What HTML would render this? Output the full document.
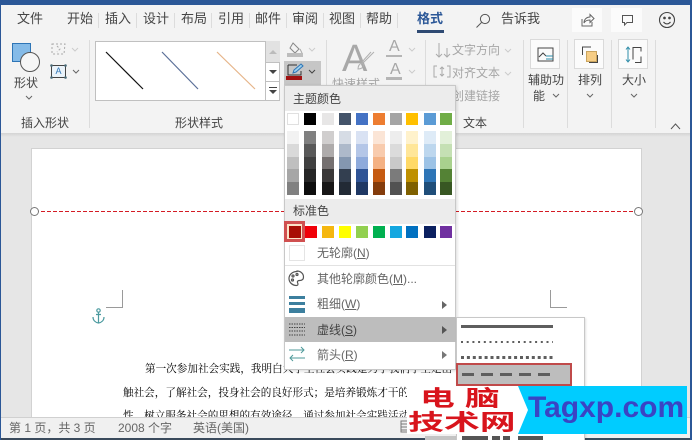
<!DOCTYPE html>
<html lang="zh"><head><meta charset="utf-8">
<style>
*{box-sizing:border-box}
html,body{margin:0;padding:0}
html{background:#e6e6e6}
body{width:692px;height:440px;position:relative;overflow:hidden;background:#e6e6e6;font-family:"Liberation Sans","Noto Sans CJK SC",sans-serif;color:#444;font-size:12px;filter:blur(.3px)}
.a{position:absolute}
.t{position:absolute;white-space:nowrap;line-height:16px}
.tb{font-size:13px}
.g{color:#a6a6a6}
.sep{position:absolute;width:1px;background:#dcdcdc}
.sw{position:absolute;width:12px;height:12px}
.col{position:absolute;width:12px;top:131px;height:64px}
.col i{display:block;height:12.8px}
.ul{text-decoration:underline}
.dt{position:absolute;left:31px;font-family:'Liberation Serif','Noto Serif CJK SC',serif;font-size:10.6px;color:#000;white-space:nowrap;line-height:16px}
svg{position:absolute;overflow:visible}
</style></head><body>

<!-- top bar + ribbon -->
<div class="a" style="left:0;top:0;width:692px;height:5px;background:#2b5797"></div>
<div class="a" style="left:0;top:5px;width:692px;height:128px;background:#f3f3f3"></div>
<div class="a" style="left:0;top:133px;width:692px;height:4px;background:linear-gradient(#d4d4d4,#e6e6e6)"></div>

<!-- tabs -->
<div class="t tb" style="left:17px;top:11px">文件</div>
<div class="t tb" style="left:67px;top:11px">开始</div>
<div class="t tb" style="left:105px;top:11px">插入</div>
<div class="t tb" style="left:143px;top:11px">设计</div>
<div class="t tb" style="left:181px;top:11px">布局</div>
<div class="t tb" style="left:218px;top:11px">引用</div>
<div class="t tb" style="left:255px;top:11px">邮件</div>
<div class="t tb" style="left:292px;top:11px">审阅</div>
<div class="t tb" style="left:329px;top:11px">视图</div>
<div class="t tb" style="left:366px;top:11px">帮助</div>
<div class="sep" style="left:98px;top:13px;height:15px"></div>
<div class="sep" style="left:136px;top:13px;height:15px"></div>
<div class="sep" style="left:174px;top:13px;height:15px"></div>
<div class="sep" style="left:211px;top:13px;height:15px"></div>
<div class="sep" style="left:249px;top:13px;height:15px"></div>
<div class="sep" style="left:286px;top:13px;height:15px"></div>
<div class="sep" style="left:323px;top:13px;height:15px"></div>
<div class="sep" style="left:360px;top:13px;height:15px"></div>
<div class="sep" style="left:397px;top:13px;height:15px"></div>
<div class="t tb" style="left:417px;top:11px;color:#2b5797;font-weight:bold">格式</div>
<div class="a" style="left:417px;top:30px;width:27px;height:3px;background:#2f4a73"></div>
<svg style="left:475px;top:13px" width="18" height="16" fill="none" stroke="#555"><circle cx="10" cy="6" r="4.6"/><path d="M6.5 9.500L1.500 14.500"/></svg>
<div class="t tb" style="left:501px;top:11px">告诉我</div>
<div class="a" style="left:572px;top:8px;width:30px;height:24px;background:#fbfbfb"></div>
<div class="a" style="left:611px;top:8px;width:31px;height:24px;background:#fbfbfb"></div>
<svg style="left:580px;top:13px" width="16" height="14" fill="none" stroke="#666"><path d="M2 6v7h10V9M4 10c0-4 3-6 6-6V1.500l4 4-4 4V7c-3 0-5 1-6 3z"/></svg>
<svg style="left:621px;top:14px" width="14" height="13" fill="none" stroke="#555"><path d="M1.500 1.500h10v7H6L3.500 11V8.500h-2z"/></svg>
<svg style="left:658px;top:11px" width="18" height="18" fill="none" stroke="#444" stroke-width="1.100"><circle cx="9" cy="9" r="7.500"/><circle cx="6.500" cy="7" r=".8" fill="#444"/><circle cx="11.500" cy="7" r=".8" fill="#444"/><path d="M5.500 11c2 2.500 5 2.500 7 0"/></svg>

<!-- insert shape group -->
<div class="a" style="left:12px;top:43px;width:19px;height:19px;background:#85bbe8;border:1px solid #2e75b6"></div>
<div class="a" style="left:20px;top:52px;width:20px;height:20px;border-radius:50%;background:#f6f6f6;border:1px solid #555"></div>
<div class="t" style="left:14px;top:75px">形状</div>
<svg style="left:25px;top:95px" width="8" height="5" fill="none" stroke="#666"><path d="M1 1l3 3 3-3"/></svg>
<svg style="left:50px;top:42px" width="17" height="14" fill="none" stroke="#aaa" stroke-dasharray="2 2"><path d="M2 2h13l-1 10H2zM7 4l3 3-3 3"/></svg>
<svg style="left:71px;top:47px" width="8" height="5" fill="none" stroke="#ccc"><path d="M1 1l3 3 3-3"/></svg>
<div class="a" style="left:51px;top:65px;width:15px;height:13px;border:1px solid #444;background:#eaf3fa;text-align:center;font-size:9px;line-height:11px;color:#2e75b6">A</div>
<svg style="left:50px;top:64px" width="17" height="15" fill="#4a6b78"><circle cx="1.500" cy="1.500" r="1.300"/><circle cx="15.500" cy="1.500" r="1.300"/><circle cx="1.500" cy="13.500" r="1.300"/><circle cx="15.500" cy="13.500" r="1.300"/></svg>
<svg style="left:72px;top:69px" width="8" height="5" fill="none" stroke="#666"><path d="M1 1l3 3 3-3"/></svg>
<div class="t" style="left:21px;top:115px">插入形状</div>
<div class="sep" style="left:89px;top:40px;height:88px"></div>

<!-- shape styles -->
<div class="a" style="left:95px;top:41px;width:171px;height:60px;background:#fff;border:1px solid #c0c0c0"></div>
<svg style="left:95px;top:41px" width="171" height="60"><path d="M11 11L48 48" stroke="#111" stroke-width="1.200"/><path d="M67 11L103 48" stroke="#5a6f98" stroke-width="1.200"/><path d="M122 11L160 48" stroke="#e6b488" stroke-width="1.200"/></svg>
<div class="a" style="left:266px;top:41px;width:14px;height:60px;background:#fff;border:1px solid #c0c0c0;border-left:0"></div>
<div class="a" style="left:266px;top:41px;width:14px;height:21px;background:#e2e2e2"></div>
<div class="a" style="left:266px;top:62px;width:14px;height:1px;background:#c0c0c0"></div>
<div class="a" style="left:266px;top:81px;width:14px;height:1px;background:#c0c0c0"></div>
<div class="a" style="left:269px;top:70px;border:4px solid transparent;border-top:4px solid #444;border-bottom:0"></div>
<div class="a" style="left:269px;top:90px;border:4px solid transparent;border-top:4px solid #444;border-bottom:0"></div>
<div class="a" style="left:269px;top:87px;width:8px;height:1px;background:#444"></div>
<svg style="left:269px;top:50px" width="8" height="5"><path d="M0 4l4-4 4 4z" fill="#bbb"/></svg>
<div class="t" style="left:175px;top:115px">形状样式</div>

<svg style="left:287px;top:41px" width="18" height="17" fill="none" stroke="#888"><path d="M6 2l6 6-4 4-5-5z"/><path d="M13 8l2 4" stroke="#aaa"/></svg>
<div class="a" style="left:287px;top:53px;width:16px;height:4px;background:#bdbdbd"></div>
<svg style="left:308px;top:47px" width="8" height="5" fill="none" stroke="#ccc"><path d="M1 1l3 3 3-3"/></svg>
<div class="a" style="left:284px;top:61px;width:37px;height:24px;background:#c6c6c6"></div>
<svg style="left:287px;top:63px" width="18" height="14" fill="none"><path d="M1 2h9M1 2v10h13V8" stroke="#333"/><path d="M6 10l1-3 7-6 2 2-7 6z" fill="#9cd0ee" stroke="#2e75b6"/></svg>
<div class="a" style="left:286px;top:76px;width:16px;height:4px;background:#a11212"></div>
<svg style="left:308px;top:69px" width="8" height="5" fill="none" stroke="#444"><path d="M1 1l3 3 3-3"/></svg>

<div class="sep" style="left:326px;top:40px;height:45px"></div>
<div class="t g" style="left:342px;top:38px;font-size:38px;line-height:42px;color:#a8a8a8">A</div>
<svg style="left:352px;top:50px" width="24" height="26" fill="none" stroke="#b0b0b0"><path d="M22 2L10 14M19 2l-9 10M10 13c-3 1-4 3-4 6 3 0 5-1 6-4z"/></svg>
<div class="t g" style="left:332px;top:76px;font-size:12px">快速样式</div>
<div class="t g" style="left:389px;top:38px;font-size:16px;line-height:18px">A</div>
<div class="a" style="left:386px;top:55px;width:16px;height:2px;background:#b5b5b5"></div>
<div class="t g" style="left:390px;top:61px;font-size:16px;line-height:18px">A</div>
<div class="a" style="left:386px;top:77px;width:16px;height:3px;background:#b5b5b5"></div>
<svg style="left:408px;top:47px" width="8" height="5" fill="none" stroke="#ccc"><path d="M1 1l3 3 3-3"/></svg>
<svg style="left:408px;top:69px" width="8" height="5" fill="none" stroke="#ccc"><path d="M1 1l3 3 3-3"/></svg>
<div class="sep" style="left:425px;top:40px;height:45px"></div>

<svg style="left:435px;top:42px" width="16" height="17" fill="none" stroke="#aaa"><path d="M4 1v14M1 12l3 3 3-3M12 6v9M9 12l3 3 3-3"/></svg>
<div class="t g" style="left:452px;top:42px">文字方向</div>
<svg style="left:504px;top:48px" width="8" height="5" fill="none" stroke="#ccc"><path d="M1 1l3 3 3-3"/></svg>
<svg style="left:433px;top:65px" width="18" height="13" fill="none" stroke="#aaa"><path d="M4 1H1v11h3M14 1h3v11h-3M9 2v9M7 4l2-2 2 2M7 9l2 2 2-2"/></svg>
<div class="t g" style="left:452px;top:65px">对齐文本</div>
<svg style="left:504px;top:71px" width="8" height="5" fill="none" stroke="#ccc"><path d="M1 1l3 3 3-3"/></svg>
<div class="t g" style="left:452px;top:88px">创建链接</div>
<div class="t" style="left:463px;top:115px">文本</div>
<div class="sep" style="left:523px;top:40px;height:88px"></div>

<!-- right buttons -->
<div class="a" style="left:530px;top:39px;width:30px;height:30px;background:#fbfbfb;border:1px solid #dadada"></div>
<svg style="left:537px;top:47px" width="17" height="15" fill="none" stroke="#444"><path d="M1 1h15v13H1z"/><path d="M2 10l4-4 3 3" /><path d="M9 9h7M9 12h7" stroke="#2e8ca8"/></svg>
<div class="t" style="left:528px;top:72px">辅助功</div>
<div class="t" style="left:533px;top:88px">能</div>
<svg style="left:552px;top:93px" width="8" height="5" fill="none" stroke="#666"><path d="M1 1l3 3 3-3"/></svg>
<div class="sep" style="left:567px;top:40px;height:88px"></div>

<div class="a" style="left:574px;top:39px;width:30px;height:30px;background:#fbfbfb;border:1px solid #dadada"></div>
<div class="a" style="left:586px;top:51px;width:11px;height:11px;background:#f6cd85;border:1px solid #c9a45f"></div>
<svg style="left:581px;top:46px" width="18" height="18" fill="none" stroke="#444"><path d="M10 1H1.500v8M8 16.500h8.500V9"/></svg>
<div class="t" style="left:578px;top:72px">排列</div>
<svg style="left:586px;top:93px" width="8" height="5" fill="none" stroke="#666"><path d="M1 1l3 3 3-3"/></svg>
<div class="sep" style="left:611px;top:40px;height:88px"></div>

<div class="a" style="left:618px;top:39px;width:30px;height:30px;background:#fbfbfb;border:1px solid #dadada"></div>
<svg style="left:625px;top:46px" width="18" height="18" fill="none"><path d="M3 1v15M1 3.500L3 1l2 2.500M1 13.500L3 16l2-2.500" stroke="#2e8ca8"/><path d="M8 1.500h8v15H8z" stroke="#444" stroke-dasharray="12 5"/></svg>
<div class="t" style="left:622px;top:72px">大小</div>
<svg style="left:630px;top:93px" width="8" height="5" fill="none" stroke="#666"><path d="M1 1l3 3 3-3"/></svg>
<div class="sep" style="left:655px;top:40px;height:88px"></div>
<svg style="left:670px;top:123px" width="11" height="7" fill="none" stroke="#555"><path d="M1 6l4.500-5L10 6"/></svg>

<!-- page -->
<div class="a" style="left:31px;top:148px;width:611px;height:270px;background:#fff;border:1px solid #d2d2d2;border-bottom:0"></div>
<div class="a" style="left:35px;top:211px;width:604px;height:1px;background:repeating-linear-gradient(90deg,#d41c24 0 4px,#fff 4px 6px)"></div>
<div class="a" style="left:30px;top:207px;width:9px;height:9px;border-radius:50%;background:#fff;border:1px solid #777"></div>
<div class="a" style="left:634px;top:207px;width:9px;height:9px;border-radius:50%;background:#fff;border:1px solid #777"></div>
<div class="a" style="left:106px;top:290px;width:17px;height:18px;border-right:1px solid #9a9a9a;border-bottom:1px solid #9a9a9a"></div>
<div class="a" style="left:550px;top:290px;width:17px;height:18px;border-left:1px solid #9a9a9a;border-bottom:1px solid #9a9a9a"></div>
<svg style="left:92px;top:308px" width="13" height="16" fill="none" stroke="#4b9a9f" stroke-width="1.200"><circle cx="6.500" cy="2.500" r="1.700"/><path d="M6.500 4v11M4 6.500h5M1 9c0 3.500 2.500 5.500 5.500 6 3-.5 5.500-2.500 5.500-6"/></svg>
<div class="dt" style="left:145px;top:362px">第一次参加社会实践，我明白大学生社会实践是为了我们学生走出</div>
<div class="dt" style="left:123px;top:386px">触社会，了解社会，投身社会的良好形式；是培养锻炼才干的</div>
<div class="dt" style="left:123px;top:409px">性、树立服务社会的思想的有效途径。通过参加社会实践活动</div>

<!-- status bar -->
<div class="a" style="left:0;top:417px;width:692px;height:21px;background:#f0f0f0;border-top:1px solid #d0d0d0"></div>
<div class="a" style="left:0;top:438px;width:692px;height:2px;background:#3a4a5c"></div>
<div class="t" style="left:9px;top:420px;color:#666">第 1 页，共 3 页</div>
<div class="t" style="left:118px;top:420px;color:#666">2008 个字</div>
<div class="t" style="left:193px;top:420px;color:#666">英语(美国)</div>
<svg style="left:400px;top:420px" width="9" height="13" fill="none" stroke="#777"><path d="M1 1h7v11H1zM1 4h7M1 7h7M1 10h7"/></svg>
<div class="a" style="left:425px;top:436px;width:31px;height:4px;background:#c4c4c4"></div>

<!-- side edges -->
<div class="a" style="left:0;top:0;width:1px;height:440px;background:#2b5797"></div>
<div class="a" style="right:0;top:0;width:2px;height:440px;background:#2b5797"></div>

<!-- colour menu -->
<div class="a" style="left:284px;top:85px;width:172px;height:285px;background:#fff;border:1px solid #c8c8c8;box-shadow:1px 1px 3px rgba(0,0,0,.15)"></div>
<div class="a" style="left:285px;top:86px;width:170px;height:25px;background:#ececec"></div>
<div class="t" style="left:293px;top:91px;color:#444">主题颜色</div>
<div class="sw" style="left:287px;top:113px;background:#fff;border:1px solid #e0e0e0"></div>
<div class="sw" style="left:304px;top:113px;background:#000"></div>
<div class="sw" style="left:322px;top:113px;background:#e7e6e6"></div>
<div class="sw" style="left:339px;top:113px;background:#44546a"></div>
<div class="sw" style="left:356px;top:113px;background:#4472c4"></div>
<div class="sw" style="left:373px;top:113px;background:#ed7d31"></div>
<div class="sw" style="left:390px;top:113px;background:#a5a5a5"></div>
<div class="sw" style="left:406px;top:113px;background:#ffc000"></div>
<div class="sw" style="left:424px;top:113px;background:#5b9bd5"></div>
<div class="sw" style="left:440px;top:113px;background:#70ad47"></div>

<div class="col" style="left:287px"><i style="background:#f2f2f2"></i><i style="background:#d9d9d9"></i><i style="background:#bfbfbf"></i><i style="background:#a6a6a6"></i><i style="background:#808080"></i></div>
<div class="col" style="left:304px"><i style="background:#808080"></i><i style="background:#595959"></i><i style="background:#404040"></i><i style="background:#262626"></i><i style="background:#0d0d0d"></i></div>
<div class="col" style="left:322px"><i style="background:#d0cece"></i><i style="background:#aeabab"></i><i style="background:#757070"></i><i style="background:#3a3838"></i><i style="background:#171616"></i></div>
<div class="col" style="left:339px"><i style="background:#d6dce5"></i><i style="background:#adb9ca"></i><i style="background:#8497b0"></i><i style="background:#333f50"></i><i style="background:#222a35"></i></div>
<div class="col" style="left:356px"><i style="background:#d9e2f3"></i><i style="background:#b4c6e7"></i><i style="background:#8eaadb"></i><i style="background:#2f5496"></i><i style="background:#1f3864"></i></div>
<div class="col" style="left:373px"><i style="background:#fbe5d6"></i><i style="background:#f8cbad"></i><i style="background:#f4b183"></i><i style="background:#c55a11"></i><i style="background:#843c0c"></i></div>
<div class="col" style="left:390px"><i style="background:#ededed"></i><i style="background:#dbdbdb"></i><i style="background:#c9c9c9"></i><i style="background:#7b7b7b"></i><i style="background:#525252"></i></div>
<div class="col" style="left:406px"><i style="background:#fff2cc"></i><i style="background:#ffe699"></i><i style="background:#ffd966"></i><i style="background:#bf9000"></i><i style="background:#7f6000"></i></div>
<div class="col" style="left:424px"><i style="background:#deebf7"></i><i style="background:#bdd7ee"></i><i style="background:#9dc3e6"></i><i style="background:#2e75b6"></i><i style="background:#1f4e79"></i></div>
<div class="col" style="left:440px"><i style="background:#e2f0d9"></i><i style="background:#c5e0b4"></i><i style="background:#a9d18e"></i><i style="background:#548235"></i><i style="background:#385723"></i></div>

<div class="a" style="left:285px;top:199px;width:170px;height:25px;background:#ececec"></div>
<div class="t" style="left:293px;top:203px;color:#444">标准色</div>
<div class="a" style="left:284px;top:221px;width:21px;height:21px;background:#d05050"></div>
<div class="a" style="left:287px;top:224px;width:15px;height:15px;background:#fbe3c8"></div>
<div class="sw" style="left:288.500px;top:225.500px;background:#a80f05"></div>
<div class="sw" style="left:305px;top:226px;background:#f00008"></div>
<div class="sw" style="left:322px;top:226px;background:#f5b70f"></div>
<div class="sw" style="left:339px;top:226px;background:#ffff00"></div>
<div class="sw" style="left:356px;top:226px;background:#92d050"></div>
<div class="sw" style="left:373px;top:226px;background:#00b050"></div>
<div class="sw" style="left:390px;top:226px;background:#14a7e0"></div>
<div class="sw" style="left:406px;top:226px;background:#0070c0"></div>
<div class="sw" style="left:424px;top:226px;background:#0b2060"></div>
<div class="sw" style="left:440px;top:226px;background:#7030a0"></div>

<div class="a" style="left:289px;top:245px;width:16px;height:16px;background:#fff;border:1px solid #e4e4e4"></div>
<div class="t" style="left:317px;top:245px;color:#666">无轮廓(<span class="ul">N</span>)</div>
<div class="a" style="left:285px;top:265px;width:170px;height:1px;background:#e2e2e2"></div>
<svg style="left:288px;top:270px" width="17" height="17" fill="none" stroke="#555" stroke-width="1.200"><path d="M9 1.500C4 1.500 1 5 1 8.500c0 4 3.500 7 7.500 7 2 0 1.500-2 1-3-.5-1.200.5-2 2-2 2.500 0 4-1 4-3.500 0-3.500-3-6-6.500-6z"/><circle cx="5" cy="6" r="1"/><circle cx="9" cy="4.500" r="1"/><circle cx="4.500" cy="10" r="1"/></svg>
<div class="t" style="left:317px;top:271px;color:#666">其他轮廓颜色(<span class="ul">M</span>)...</div>

<div class="a" style="left:289px;top:296px;width:16px;height:3px;background:#3c7f9e"></div>
<div class="a" style="left:289px;top:302px;width:16px;height:3px;background:#3c7f9e"></div>
<div class="a" style="left:289px;top:308px;width:16px;height:5px;background:#3c7f9e"></div>
<div class="t" style="left:317px;top:296px;color:#666">粗细(<span class="ul">W</span>)</div>
<div class="a" style="left:442px;top:301px;border:4px solid transparent;border-left:5px solid #666;border-right:0"></div>

<div class="a" style="left:285px;top:317px;width:171px;height:25px;background:#bdbdbd"></div>
<svg style="left:289px;top:323px" width="16" height="13" stroke="#444" stroke-dasharray="1.500 1"><path d="M0 1h16M0 4.500h16M0 8h16M0 12h16"/></svg>
<div class="t" style="left:317px;top:322px;color:#444">虚线(<span class="ul">S</span>)</div>
<div class="a" style="left:442px;top:326px;border:4px solid transparent;border-left:5px solid #555;border-right:0"></div>

<svg style="left:288px;top:345px" width="18" height="18" fill="none" stroke="#4f9a9a"><path d="M1 5h15M13 2l3 3-3 3M17 13H2M5 10l-3 3 3 3"/></svg>
<div class="t" style="left:317px;top:347px;color:#666">箭头(<span class="ul">R</span>)</div>
<div class="a" style="left:442px;top:351px;border:4px solid transparent;border-left:5px solid #777;border-right:0"></div>

<!-- dash submenu -->
<div class="a" style="left:456px;top:317px;width:129px;height:123px;background:#fff;border:1px solid #c8c8c8;box-shadow:1px 1px 2px rgba(0,0,0,.12)"></div>
<div class="a" style="left:461px;top:325px;width:92px;height:3px;background:#5e5e5e"></div>
<svg style="left:461px;top:341px" width="92" height="2"><path d="M0 1h92" stroke="#5e5e5e" stroke-width="2" stroke-dasharray="2 3.700"/></svg>
<svg style="left:461px;top:356px" width="92" height="3"><path d="M0 1.500h92" stroke="#5e5e5e" stroke-width="3" stroke-dasharray="3 2.900"/></svg>
<div class="a" style="left:456px;top:363px;width:116px;height:23px;background:#bdbdbd;border:2px solid #c04a4a"></div>
<svg style="left:462px;top:373px" width="88" height="3"><path d="M0 1.500h88" stroke="#5e5e5e" stroke-width="3" stroke-dasharray="12 7"/></svg>

<!-- watermark -->
<div class="a" style="left:407px;top:386px;width:115px;height:48px;background:#fff"></div>
<div class="a" style="left:518px;top:386px;width:169px;height:48px;background:#00ccff;clip-path:polygon(0 0,100% 0,100% 100%,0 100%,10px 50%)"></div>
<div class="t" style="left:420px;top:388px;font-size:22px;line-height:22px;font-weight:bold;color:#d8141c;letter-spacing:6.500px;transform-origin:0 0;transform:scaleX(1.580)">电脑</div>
<div class="t" style="left:408px;top:412px;font-size:22px;line-height:22px;font-weight:bold;color:#d8141c;transform-origin:0 0;transform:scaleX(1.630)">技术网</div>
<div class="t" style="left:528px;top:393px;font-size:30px;line-height:30px;font-weight:bold;color:#3a44c4;transform-origin:0 0">Tagxp.com</div>
<div class="a" style="left:457px;top:434px;width:127px;height:6px;background:#fff"></div>
<div class="a" style="left:462px;top:436px;width:26px;height:4px;background:#555"></div>
<div class="a" style="left:492px;top:436px;width:8px;height:4px;background:#555"></div>
<div class="a" style="left:503px;top:436px;width:7px;height:4px;background:#555"></div>
<div class="a" style="left:518px;top:436px;width:25px;height:4px;background:#555"></div>
</body></html>
